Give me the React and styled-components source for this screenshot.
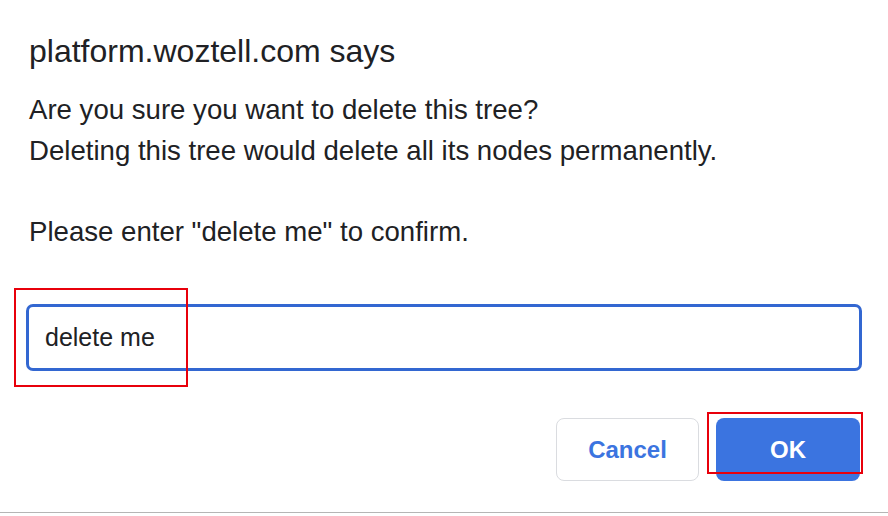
import React from 'react'
import styled, { createGlobalStyle } from 'styled-components'

const Global = createGlobalStyle`
  html, body {
    margin: 0;
    padding: 0;
    background: #ffffff;
  }
  body {
    font-family: "Liberation Sans", Arial, sans-serif;
    color: #202124;
  }
`

const App = () => {
    return (
        <>
            <Global />
            <Dialog>
                <Title>platform.woztell.com says</Title>
                <Message>
                    Are you sure you want to delete this tree?<br />
                    Deleting this tree would delete all its nodes permanently.<br />
                    <br />
                    Please enter "delete me" to confirm.
                </Message>
                <InputWrap>
                    <PromptInput defaultValue="delete me" readOnly />
                    <Mark $left={-12} $top={-16} $w={174} $h={99} />
                </InputWrap>
                <Buttons>
                    <Button>Cancel</Button>
                    <ButtonWrap>
                        <Button $primary>OK</Button>
                        <Mark $left={-9} $top={-6} $w={156} $h={62} />
                    </ButtonWrap>
                </Buttons>
            </Dialog>
        </>
    )
}

export default App

const Dialog = styled.div`
    width: 888px;
    height: 513px;
    box-sizing: border-box;
    padding: 33px 26px 0 26px;
    background: #fff;
    border-bottom: 1px solid #b5b5b5;
    box-shadow: 0 1px 2px rgba(0, 0, 0, 0.3);
    display: flex;
    flex-direction: column;
`
const Title = styled.div`
    font-size: 32px;
    line-height: 36px;
    padding-left: 3px;
    color: #202124;
`
const Message = styled.div`
    margin-top: 21px;
    padding-left: 3px;
    font-size: 27.6px;
    line-height: 40.5px;
    color: #202124;
`
const InputWrap = styled.div`
    position: relative;
    margin-top: 52px;
`
const PromptInput = styled.input`
    display: block;
    width: 100%;
    height: 67px;
    box-sizing: border-box;
    border: 3px solid #3367d1;
    border-radius: 7px;
    padding: 0 0 0 16px;
    font-family: "Liberation Sans", Arial, sans-serif;
    font-size: 25px;
    color: #202124;
    outline: none;
    background: #fff;
`
const Mark = styled.div`
    position: absolute;
    left: ${p => p.$left}px;
    top: ${p => p.$top}px;
    width: ${p => p.$w}px;
    height: ${p => p.$h}px;
    box-sizing: border-box;
    border: 2px solid #e8000b;
    pointer-events: none;
`
const Buttons = styled.div`
    display: flex;
    justify-content: flex-end;
    gap: 17px;
    margin-top: 47px;
    padding-right: 2px;
`
const ButtonWrap = styled.div`
    position: relative;
`
const Button = styled.button`
    width: ${p => p.$primary ? 144 : 143}px;
    height: 63px;
    box-sizing: border-box;
    border-radius: 8px;
    border: ${p => p.$primary ? 'none' : '1px solid #dadce0'};
    background: ${p => p.$primary ? '#3b74e0' : '#fff'};
    color: ${p => p.$primary ? '#fff' : '#3b74e0'};
    font-family: "Liberation Sans", Arial, sans-serif;
    font-weight: 700;
    font-size: 24px;
    padding: 0;
`
